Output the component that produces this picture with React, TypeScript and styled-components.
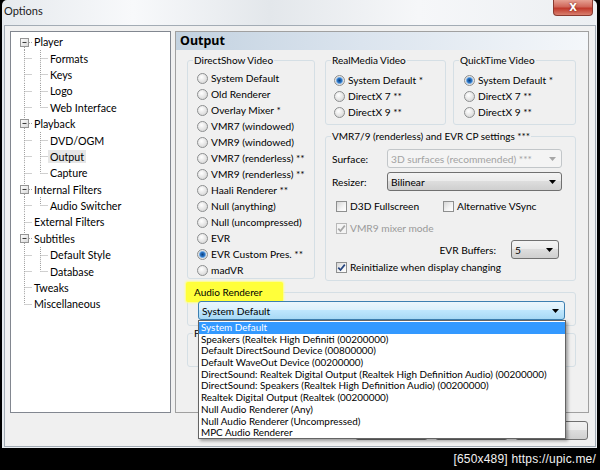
import React from 'react'
import styled, { createGlobalStyle, css } from 'styled-components'

const UI_FONT = `Lato, "Noto Sans", sans-serif`

const GlobalStyle = createGlobalStyle`
  html, body {
    margin: 0;
    padding: 0;
    background: #000;
  }
  body {
    font-family: ${UI_FONT};
    font-size: 10px;
    color: #000;
  }
  * {
    box-sizing: border-box;
  }
`

type TreeNode = { label: string; children?: string[] }

const tree: TreeNode[] = [
  { label: 'Player', children: ['Formats', 'Keys', 'Logo', 'Web Interface'] },
  { label: 'Playback', children: ['DVD/OGM', 'Output', 'Capture'] },
  { label: 'Internal Filters', children: ['Audio Switcher'] },
  { label: 'External Filters' },
  { label: 'Subtitles', children: ['Default Style', 'Database'] },
  { label: 'Tweaks' },
  { label: 'Miscellaneous' },
]

const directShow = [
  'System Default',
  'Old Renderer',
  'Overlay Mixer *',
  'VMR7 (windowed)',
  'VMR9 (windowed)',
  'VMR7 (renderless) **',
  'VMR9 (renderless) **',
  'Haali Renderer **',
  'Null (anything)',
  'Null (uncompressed)',
  'EVR',
  'EVR Custom Pres. **',
  'madVR',
]

const mediaOptions = ['System Default *', 'DirectX 7 **', 'DirectX 9 **']

const audioDevices = [
  'System Default',
  'Speakers (Realtek High Definiti (00200000)',
  'Default DirectSound Device (00800000)',
  'Default WaveOut Device (00200000)',
  'DirectSound: Realtek Digital Output (Realtek High Definition Audio) (00200000)',
  'DirectSound: Speakers (Realtek High Definition Audio) (00200000)',
  'Realtek Digital Output (Realtek (00200000)',
  'Null Audio Renderer (Any)',
  'Null Audio Renderer (Uncompressed)',
  'MPC Audio Renderer',
]

/* ---------- window chrome ---------- */

const Screen = styled.div`
  width: 600px;
  height: 470px;
  overflow: hidden;
  background: #000;
  display: flex;
  flex-direction: column;
`

const Window = styled.div`
  flex: none;
  width: 595px;
  height: 448px;
  margin-left: 2px;
  padding: 0 1px 1px 2px;
  border-radius: 5px 5px 0 0;
  background: linear-gradient(
    90deg,
    #e6eaee 0%,
    #f8f9fb 22%,
    #e3e7eb 45%,
    #f6f7f9 70%,
    #eceff2 100%
  );
  display: flex;
  flex-direction: column;
`

const TitleBar = styled.div`
  height: 25px;
  flex: none;
  display: flex;
  justify-content: space-between;
  align-items: flex-start;
`

const Title = styled.div`
  margin-left: 0;
  font-size: 11px;
  line-height: 22px;
  color: #1b1b1b;
`

const CloseButton = styled.div`
  width: 40px;
  height: 16px;
  margin-right: 3px;
  border: 1px solid #8a3a30;
  border-top: none;
  border-radius: 0 0 4px 4px;
  background: linear-gradient(180deg, #e6a193 0%, #d0675a 45%, #c0392b 55%, #d9806f 100%);
  color: #fff;
  font-family: "DejaVu Sans", sans-serif;
  font-weight: bold;
  font-size: 10px;
  line-height: 15px;
  text-align: center;
  text-shadow: 0 0 2px #6a1a10;
`

const Client = styled.div`
  flex: 1;
  background: #f0f0f0;
  border: 1px solid #a3acb5;
  padding: 5px 5px 0 5px;
  display: grid;
  grid-template-columns: 161px 414px;
  grid-template-rows: 382px 19px;
  column-gap: 4px;
  row-gap: 8px;
  align-content: start;
`

const Caption = styled.div`
  flex: 1;
  display: flex;
  justify-content: flex-end;
  align-items: center;
  padding-right: 4px;
  color: #f2f2f2;
  font-family: "Liberation Sans", sans-serif;
  font-size: 12px;
  letter-spacing: 0.2px;
`

/* ---------- tree ---------- */

const TreeBox = styled.div`
  border: 1px solid #828790;
  background: #fff;
  padding: 1.5px 0 0 5px;
`

const TreeRow = styled.div`
  height: 16.4px;
  display: flex;
  align-items: center;
`

const TreeLabel = styled.span<{ $selected?: boolean }>`
  padding: 0 2px;
  line-height: 13px;
  font-size: 10.7px;
  white-space: nowrap;
  color: #000;
  ${(p) =>
    p.$selected &&
    css`
      background: #e6e6e6;
    `}
`

const GuideSvg = styled.svg`
  flex: none;
  display: block;
`

function Guide({ up, down, box }: { up?: boolean; down?: boolean; box?: boolean }) {
  const mid = 8.2
  return (
    <GuideSvg width={16} height={16.4} viewBox="0 0 16 16.4">
      <g stroke="#a0a0a0" strokeWidth={1} strokeDasharray="1 1" fill="none">
        {up && <line x1={8.5} y1={0} x2={8.5} y2={box ? 4 : mid} />}
        {down && <line x1={8.5} y1={box ? 13 : mid} x2={8.5} y2={16.4} />}
        <line x1={box ? 13 : 8.5} y1={8.5} x2={16} y2={8.5} />
      </g>
      {box && (
        <>
          <defs>
            <linearGradient id="tb" x1="0" y1="0" x2="1" y2="1">
              <stop offset="0" stopColor="#ffffff" />
              <stop offset="1" stopColor="#d8d8d8" />
            </linearGradient>
          </defs>
          <rect x={4.5} y={4.5} width={8} height={8} fill="url(#tb)" stroke="#959595" />
          <line x1={6.5} y1={8.5} x2={10.5} y2={8.5} stroke="#3a3a3a" />
        </>
      )}
    </GuideSvg>
  )
}

function Tree() {
  return (
    <TreeBox>
      {tree.map((node, i) => {
        const lastRoot = i === tree.length - 1
        return (
          <React.Fragment key={node.label}>
            <TreeRow>
              <Guide up={i > 0} down={!lastRoot} box={!!node.children} />
              <TreeLabel>{node.label}</TreeLabel>
            </TreeRow>
            {node.children?.map((child, j) => (
              <TreeRow key={child}>
                <Guide up={!lastRoot} down={!lastRoot} />
                <Guide up down={j < node.children!.length - 1} />
                <TreeLabel $selected={child === 'Output'}>{child}</TreeLabel>
              </TreeRow>
            ))}
          </React.Fragment>
        )
      })}
    </TreeBox>
  )
}

/* ---------- page ---------- */

const Panel = styled.div`
  border: 1px solid #a0a0a0;
  display: flex;
  flex-direction: column;
`

const PanelHeader = styled.div`
  height: 18px;
  padding-left: 4px;
  background: linear-gradient(90deg, #c3d2e0 0%, #dbe4ee 45%, #f4f7fa 100%);
  font-family: "Noto Sans", sans-serif;
  font-size: 12.5px;
  font-weight: bold;
  line-height: 18px;
`

const PanelBody = styled.div`
  padding: 4px 12px 0 11px;
  display: flex;
  flex-direction: column;
`

const TopGrid = styled.div`
  display: grid;
  grid-template-columns: 128px 251px;
  column-gap: 10px;
  align-items: start;
`

const Group = styled.fieldset<{ $width?: number; $mt?: number }>`
  margin: ${(p) => p.$mt ?? 0}px 0 0 0;
  padding: 0;
  min-width: 0;
  border: 1px solid #d5dfe5;
  border-radius: 3px;
  ${(p) => p.$width && `width: ${p.$width}px;`}
`

const Legend = styled.legend`
  margin-left: 5px;
  padding: 0 1px;
  font-size: 10px;
  line-height: 13px;
  white-space: nowrap;
`

const Highlight = styled.span`
  display: inline-block;
  padding: 4px 20px 3px 8px;
  margin: -4px -20px -3px -8px;
  background: #ffff3a;
  border-radius: 2px;
  box-shadow: 0 0 2px 1px #ffff80;
`

const GroupBody = styled.div<{ $pad: string }>`
  padding: ${(p) => p.$pad};
  display: flex;
  flex-direction: column;
`

const OptionRow = styled.div<{ $gap?: number }>`
  height: 16px;
  display: flex;
  align-items: center;
  gap: ${(p) => p.$gap ?? 3}px;
  white-space: nowrap;
`

const RadioDot = styled.span<{ $checked?: boolean }>`
  flex: none;
  width: 11px;
  height: 11px;
  border-radius: 50%;
  border: 1px solid #8d8f90;
  background: radial-gradient(circle at 40% 35%, #ffffff 0%, #e4e4e4 55%, #cfcfcf 100%);
  ${(p) =>
    p.$checked &&
    css`
      background: radial-gradient(
        circle at 50% 50%,
        #0e3f78 0px,
        #2a74c6 2.2px,
        #8fbce8 3.3px,
        #e6e6e6 3.9px,
        #d2d2d2 100%
      );
    `}
`

const OptionText = styled.span<{ $disabled?: boolean }>`
  font-size: 10.2px;
  color: ${(p) => (p.$disabled ? '#9a9a9a' : '#000')};
`

function Radio({ label, checked }: { label: string; checked?: boolean }) {
  return (
    <OptionRow>
      <RadioDot $checked={checked} />
      <OptionText>{label}</OptionText>
    </OptionRow>
  )
}

const CheckBox = styled.span<{ $disabled?: boolean }>`
  flex: none;
  width: 11px;
  height: 11px;
  border: 1px solid ${(p) => (p.$disabled ? '#b8b8b8' : '#8e8f8f')};
  background: ${(p) =>
    p.$disabled ? '#f4f4f4' : 'linear-gradient(135deg, #d6d6d6 0%, #f4f4f4 60%, #ffffff 100%)'};
  display: flex;
  align-items: center;
  justify-content: center;
`

function Check({
  label,
  checked,
  disabled,
  width,
}: {
  label: string
  checked?: boolean
  disabled?: boolean
  width?: number
}) {
  return (
    <CheckItem $width={width}>
      <CheckBox $disabled={disabled}>
        {checked && (
          <svg width="9" height="9" viewBox="0 0 9 9">
            <path
              d="M1.3 4.6 L3.5 7 L7.8 1.6"
              fill="none"
              stroke={disabled ? '#a6a6a6' : '#26457f'}
              strokeWidth="1.7"
            />
          </svg>
        )}
      </CheckBox>
      <OptionText $disabled={disabled}>{label}</OptionText>
    </CheckItem>
  )
}

const CheckItem = styled.div<{ $width?: number }>`
  display: flex;
  align-items: center;
  gap: 3px;
  white-space: nowrap;
  ${(p) => p.$width && `width: ${p.$width}px;`}
`

const CheckRow = styled.div<{ $mt: number }>`
  height: 16px;
  margin-top: ${(p) => p.$mt}px;
  padding-left: 4px;
  display: flex;
  align-items: center;
`

const FieldRow = styled.div<{ $mt?: number }>`
  height: 19px;
  margin-top: ${(p) => p.$mt ?? 0}px;
  display: flex;
  align-items: center;
`

const FieldLabel = styled.span`
  width: 55px;
  flex: none;
  font-size: 10.2px;
`

type ComboKind = 'normal' | 'disabled' | 'hot'

const comboLook = {
  normal: css`
    border: 1px solid #707070;
    background: linear-gradient(180deg, #f4f4f4 0%, #ebebeb 49%, #dddddd 50%, #cfcfcf 100%);
    color: #000;
  `,
  disabled: css`
    border: 1px solid #c2c6c9;
    background: #f4f4f4;
    color: #a3a3a3;
  `,
  hot: css`
    border: 1px solid #3c7fb1;
    background: linear-gradient(180deg, #eaf6fd 0%, #d9f0fc 49%, #bee6fd 50%, #a7d9f5 100%);
    color: #000;
  `,
}

const ComboBox = styled.div<{ $kind: ComboKind; $width?: number }>`
  height: 19px;
  ${(p) => (p.$width ? `width: ${p.$width}px;` : 'flex: 1;')}
  border-radius: 3px;
  padding-left: 3px;
  display: flex;
  align-items: center;
  justify-content: space-between;
  font-size: 10.2px;
  white-space: nowrap;
  ${(p) => comboLook[p.$kind]}
`

function Combo({ value, kind = 'normal', width }: { value: string; kind?: ComboKind; width?: number }) {
  return (
    <ComboBox $kind={kind} $width={width}>
      <span>{value}</span>
      <svg width="7" height="4" viewBox="0 0 7 4" style={{ marginRight: 5 }}>
        <path d="M0 0 H7 L3.5 4 Z" fill={kind === 'disabled' ? '#a6a6a6' : '#000'} />
      </svg>
    </ComboBox>
  )
}

const MediaRow = styled.div`
  display: flex;
  gap: 7px;
`

const RightColumn = styled.div`
  display: flex;
  flex-direction: column;
`

const BuffersRow = styled.div`
  height: 19px;
  margin-top: 4px;
  margin-right: 3px;
  display: flex;
  justify-content: flex-end;
  align-items: center;
  gap: 15px;
  font-size: 10.2px;
`

const AudioAnchor = styled.div`
  position: relative;
  display: flex;
`

const DropList = styled.div`
  position: absolute;
  top: 100%;
  left: 0;
  width: calc(100% + 1px);
  height: 119px;
  z-index: 10;
  padding-top: 1px;
  background: #fff;
  border: 1px solid #646464;
  box-shadow: 2px 2px 3px rgba(0, 0, 0, 0.35);
`

const DropItem = styled.div<{ $selected?: boolean }>`
  height: 11.7px;
  padding-left: 2px;
  font-size: 9.9px;
  line-height: 11.7px;
  white-space: nowrap;
  color: ${(p) => (p.$selected ? '#fff' : '#000')};
  background: ${(p) => (p.$selected ? '#3399ff' : 'transparent')};
`

const ButtonRow = styled.div`
  grid-column: 1 / -1;
  display: flex;
  justify-content: flex-end;
  gap: 7px;
  padding-right: 1px;
`

const PushButton = styled.div`
  width: 73px;
  height: 19px;
  border: 1px solid #707070;
  border-radius: 3px;
  background: linear-gradient(180deg, #f2f2f2 0%, #ebebeb 49%, #dddddd 50%, #cfcfcf 100%);
  font-size: 10.2px;
  line-height: 17px;
  text-align: center;
`

function OutputPage() {
  return (
    <Panel>
      <PanelHeader>Output</PanelHeader>
      <PanelBody>
        <TopGrid>
          <Group>
            <Legend>DirectShow Video</Legend>
            <GroupBody $pad="3px 0 0 9px">
              {directShow.map((o) => (
                <Radio key={o} label={o} checked={o === 'EVR Custom Pres. **'} />
              ))}
            </GroupBody>
          </Group>

          <RightColumn>
            <MediaRow>
              <Group $width={121}>
                <Legend>RealMedia Video</Legend>
                <GroupBody $pad="5px 0 4px 8px">
                  {mediaOptions.map((o, i) => (
                    <Radio key={o} label={o} checked={i === 0} />
                  ))}
                </GroupBody>
              </Group>
              <Group $width={123}>
                <Legend>QuickTime Video</Legend>
                <GroupBody $pad="5px 0 4px 10px">
                  {mediaOptions.map((o, i) => (
                    <Radio key={o} label={o} checked={i === 0} />
                  ))}
                </GroupBody>
              </Group>
            </MediaRow>

            <Group $mt={5}>
              <Legend>VMR7/9 (renderless) and EVR CP settings ***</Legend>
              <GroupBody $pad="6px 13px 5px 6px">
                <FieldRow>
                  <FieldLabel>Surface:</FieldLabel>
                  <Combo kind="disabled" value="3D surfaces (recommended) ***" />
                </FieldRow>
                <FieldRow $mt={4}>
                  <FieldLabel>Resizer:</FieldLabel>
                  <Combo value="Bilinear" />
                </FieldRow>
                <CheckRow $mt={7}>
                  <Check label="D3D Fullscreen" width={107} />
                  <Check label="Alternative VSync" />
                </CheckRow>
                <CheckRow $mt={6}>
                  <Check label="VMR9 mixer mode" checked disabled />
                </CheckRow>
                <BuffersRow>
                  <span>EVR Buffers:</span>
                  <Combo value="5" width={48} />
                </BuffersRow>
                <CheckRow $mt={0}>
                  <Check label="Reinitialize when display changing" checked />
                </CheckRow>
              </GroupBody>
            </Group>
          </RightColumn>
        </TopGrid>

        <Group $mt={5}>
          <Legend>
            <Highlight>Audio Renderer</Highlight>
          </Legend>
          <GroupBody $pad="2px 10px 5px 10px">
            <AudioAnchor>
              <Combo kind="hot" value="System Default" />
              <DropList>
                {audioDevices.map((d, i) => (
                  <DropItem key={d} $selected={i === 0}>
                    {d}
                  </DropItem>
                ))}
              </DropList>
            </AudioAnchor>
          </GroupBody>
        </Group>

        <Group $mt={1}>
          <Legend>F</Legend>
          <GroupBody $pad="0" style={{ height: 26 }} />
        </Group>
      </PanelBody>
    </Panel>
  )
}

export default function App() {
  return (
    <>
      <GlobalStyle />
      <Screen>
        <Window>
          <TitleBar>
            <Title>Options</Title>
            <CloseButton>X</CloseButton>
          </TitleBar>
          <Client>
            <Tree />
            <OutputPage />
            <ButtonRow>
              <PushButton>OK</PushButton>
              <PushButton>Cancel</PushButton>
              <PushButton>Apply</PushButton>
            </ButtonRow>
          </Client>
        </Window>
        <Caption>[650x489] https://upic.me/</Caption>
      </Screen>
    </>
  )
}
